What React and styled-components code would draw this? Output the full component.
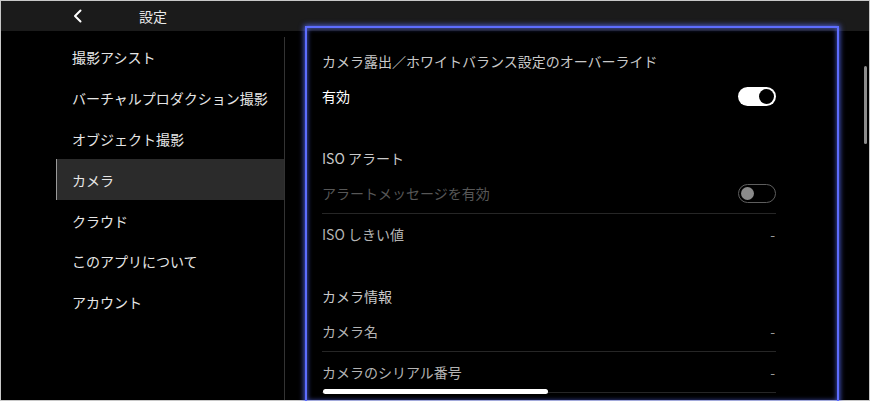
import styled, { createGlobalStyle } from "styled-components";

const GlobalStyle = createGlobalStyle`
  html, body {
    margin: 0;
    padding: 0;
    background: #ffffff;
  }
  body {
    font-family: "Noto Sans CJK JP", "Noto Sans", sans-serif;
    -webkit-font-smoothing: antialiased;
  }
`;

const menuItems = [
  "撮影アシスト",
  "バーチャルプロダクション撮影",
  "オブジェクト撮影",
  "カメラ",
  "クラウド",
  "このアプリについて",
  "アカウント",
];

const Toggle = ({ on, disabled }) => (
  <Track $on={on} $disabled={disabled}>
    <Knob $on={on} $disabled={disabled} />
  </Track>
);

const App = () => {
  return (
    <>
      <GlobalStyle />
      <Screen>
        <Header>
          <BackButton>
            <svg width="12" height="14" viewBox="0 0 12 14">
              <polyline
                points="8.5,1.5 3,7 8.5,12.5"
                fill="none"
                stroke="#fff"
                strokeWidth="2"
                strokeLinecap="round"
                strokeLinejoin="round"
              />
            </svg>
          </BackButton>
          <Title>設定</Title>
        </Header>
        <Body>
          <Sidebar>
            <Menu>
              {menuItems.map((item) => (
                <MenuItem key={item} $active={item === "カメラ"}>
                  {item}
                </MenuItem>
              ))}
            </Menu>
          </Sidebar>
          <Content>
            <Section>
              <SectionTitle>
                カメラ露出／ホワイトバランス設定のオーバーライド
              </SectionTitle>
              <Row>
                <Label $tone="bright">有効</Label>
                <Toggle on />
              </Row>
            </Section>
            <Section>
              <SectionTitle>ISO アラート</SectionTitle>
              <Row $divider>
                <Label $tone="disabled">アラートメッセージを有効</Label>
                <Toggle disabled />
              </Row>
              <Row>
                <Label>ISO しきい値</Label>
                <Value>-</Value>
              </Row>
            </Section>
            <Section>
              <SectionTitle>カメラ情報</SectionTitle>
              <Row $divider>
                <Label>カメラ名</Label>
                <Value>-</Value>
              </Row>
              <Row $divider>
                <Label>カメラのシリアル番号</Label>
                <Value>-</Value>
              </Row>
            </Section>
          </Content>
        </Body>
        <ScrollThumb />
        <HomeIndicator />
        <FocusRing />
      </Screen>
    </>
  );
};

export default App;

const Screen = styled.div`
  position: relative;
  box-sizing: border-box;
  width: 870px;
  height: 401px;
  border: 1px solid #c8c8c8;
  background: #000;
  display: flex;
  flex-direction: column;
`;

const Header = styled.header`
  height: 30px;
  flex-shrink: 0;
  background: #1b1b1b;
  display: flex;
  align-items: center;
  color: #f0f0f0;
`;

const BackButton = styled.div`
  width: 12px;
  height: 14px;
  margin-left: 71px;
  margin-top: -1px;
  display: flex;
`;

const Title = styled.div`
  margin-left: 55px;
  font-size: 14px;
  line-height: 1;
  margin-top: -1px;
  color: #eaeaea;
`;

const Body = styled.div`
  flex: 1;
  display: flex;
  overflow: hidden;
`;

const Sidebar = styled.nav`
  width: 284px;
  flex-shrink: 0;
  padding-top: 6px;
  box-sizing: border-box;
  padding-left: 55px;
  display: flex;
`;

const Menu = styled.ul`
  list-style: none;
  margin: 0;
  padding: 0;
  flex: 1;
  border-right: 1px solid #333;
`;

const MenuItem = styled.li`
  height: 40.8px;
  display: flex;
  align-items: center;
  box-sizing: border-box;
  padding-left: 15px;
  font-size: 14px;
  color: #e6e6e6;
  background: ${(p) => (p.$active ? "#2b2b2b" : "transparent")};
  border-left: 1px solid ${(p) => (p.$active ? "#9a9a9a" : "transparent")};
`;

const Content = styled.main`
  width: 454px;
  margin-left: 37px;
  padding-top: 15px;
  display: flex;
  flex-direction: column;
  gap: 26px;
`;

const Section = styled.section`
  display: flex;
  flex-direction: column;
`;

const SectionTitle = styled.div`
  height: 30px;
  display: flex;
  align-items: center;
  font-size: 14px;
  color: #c9c9c9;
`;

const Row = styled.div`
  height: 41px;
  box-sizing: border-box;
  display: flex;
  align-items: center;
  justify-content: space-between;
  border-bottom: 1px solid ${(p) => (p.$divider ? "#262626" : "transparent")};
`;

const toneColors = {
  bright: "#ffffff",
  normal: "#b4b4b4",
  disabled: "#575757",
};

const Label = styled.span`
  font-size: 14px;
  color: ${(p) => toneColors[p.$tone || "normal"]};
`;

const Value = styled.span`
  font-size: 14px;
  color: #9a9a9a;
  margin-right: 1px;
`;

const Track = styled.div`
  width: 38px;
  height: 19px;
  box-sizing: border-box;
  border-radius: 10px;
  display: flex;
  align-items: center;
  justify-content: ${(p) => (p.$on ? "flex-end" : "flex-start")};
  padding: 0 2px;
  background: ${(p) => (p.$on ? "#ffffff" : "#000")};
  border: ${(p) => (p.$on ? "none" : "1.5px solid #5e5e5e")};
`;

const Knob = styled.div`
  width: ${(p) => (p.$on ? "15px" : "13px")};
  height: ${(p) => (p.$on ? "15px" : "13px")};
  border-radius: 50%;
  background: ${(p) => (p.$on ? "#000" : "#8a8a8a")};
`;

const ScrollThumb = styled.div`
  position: absolute;
  right: 2px;
  top: 65px;
  width: 3px;
  height: 78px;
  border-radius: 2px;
  background: #8c8c8c;
`;

const HomeIndicator = styled.div`
  position: absolute;
  left: 322px;
  top: 388px;
  width: 225px;
  height: 5px;
  border-radius: 3px;
  background: #fff;
`;

const FocusRing = styled.div`
  position: absolute;
  left: 304px;
  top: 25px;
  width: 534px;
  height: 377px;
  box-sizing: border-box;
  border: 2px solid #5d6dff;
  box-shadow: 0 0 5px 1px rgba(90, 110, 255, 0.8),
    inset 0 0 4px 1px rgba(90, 110, 255, 0.6);
  pointer-events: none;
`;
